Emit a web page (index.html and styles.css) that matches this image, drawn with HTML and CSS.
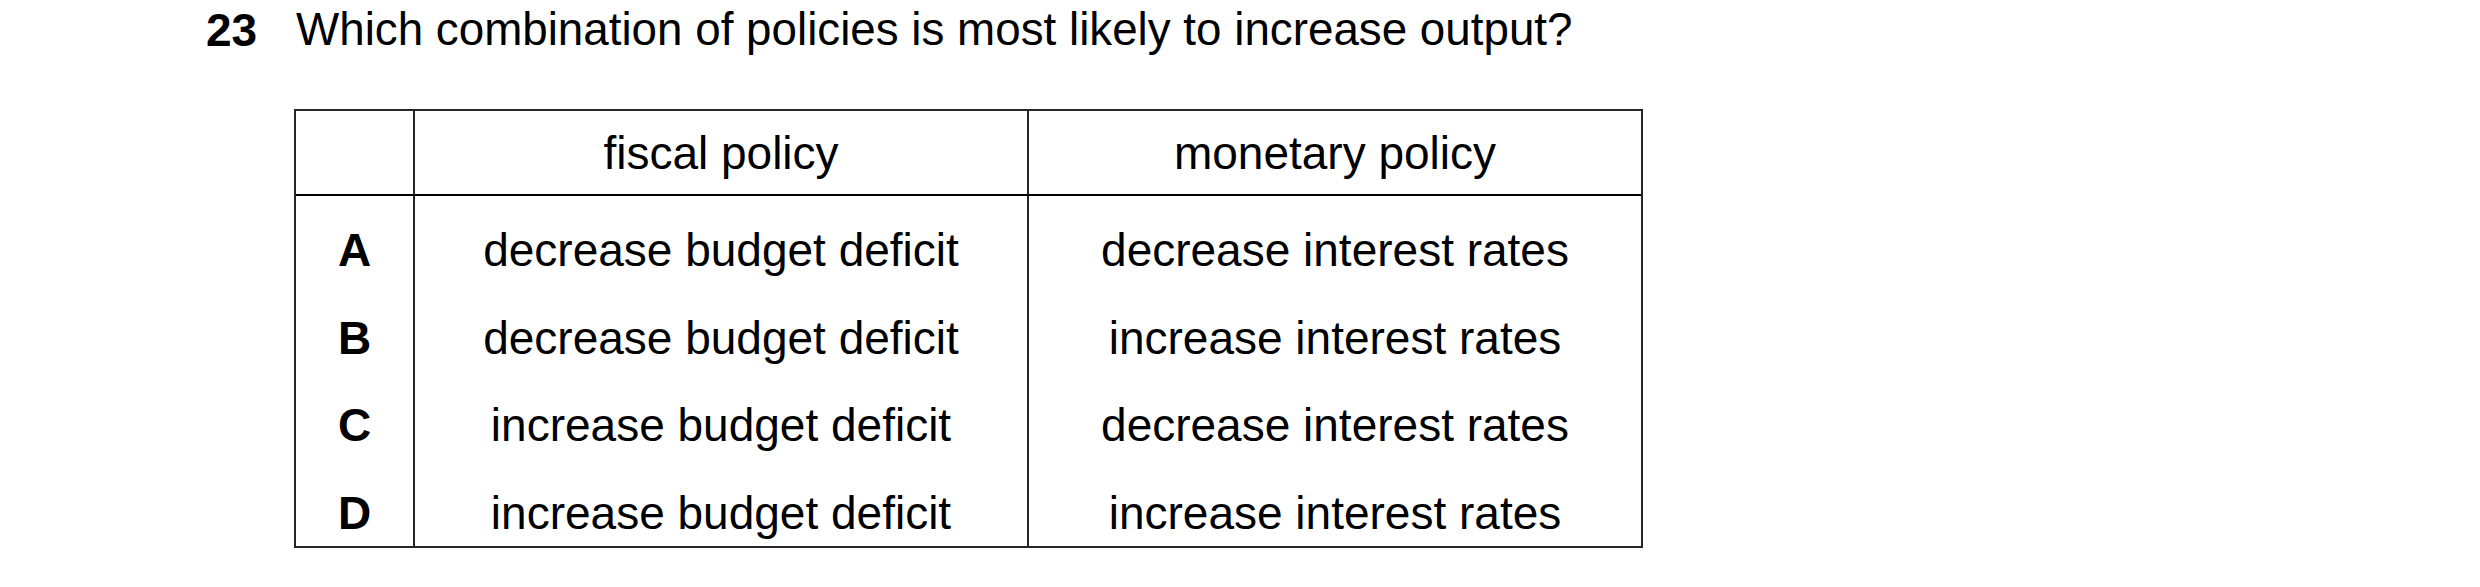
FILE: index.html
```html
<!DOCTYPE html>
<html lang="en">
<head>
<meta charset="utf-8">
<title>Question 23</title>
<link rel="stylesheet" href="styles.css">
</head>
<body>
  <div class="question">
    <span class="qnum">23</span>
    <span class="qtext">Which combination of policies is most likely to increase output?</span>
  </div>
  <div class="table">
    <div class="cell head key"></div>
    <div class="cell head">fiscal policy</div>
    <div class="cell head">monetary policy</div>
    <div class="cell body key">
      <div class="line">A</div>
      <div class="line">B</div>
      <div class="line">C</div>
      <div class="line">D</div>
    </div>
    <div class="cell body">
      <div class="line">decrease budget deficit</div>
      <div class="line">decrease budget deficit</div>
      <div class="line">increase budget deficit</div>
      <div class="line">increase budget deficit</div>
    </div>
    <div class="cell body">
      <div class="line">decrease interest rates</div>
      <div class="line">increase interest rates</div>
      <div class="line">decrease interest rates</div>
      <div class="line">increase interest rates</div>
    </div>
  </div>
</body>
</html>
```
FILE: styles.css
```css
html, body {
  margin: 0;
  padding: 0;
  background: #ffffff;
}

body {
  font-family: "Liberation Sans", Arial, sans-serif;
  font-size: 46px;
  color: #000000;
}

.question {
  display: flex;
  padding-left: 206px;
  padding-top: 2px;
  line-height: 56px;
  height: 56px;
}

.qnum {
  font-weight: bold;
  width: 90px;
  flex: none;
}

.qtext {
  white-space: nowrap;
  font-size: 45.75px;
}

.table {
  display: grid;
  grid-template-columns: 117px 614px 614px;
  grid-template-rows: 85px 350px;
  width: max-content;
  margin-left: 294px;
  margin-top: 51px;
  border: 2px solid #262626;
}

.cell {
  text-align: center;
  border-left: 2px solid #262626;
}

.cell.key {
  border-left: none;
}

.head {
  display: flex;
  align-items: center;
  justify-content: center;
  line-height: 56px;
  border-bottom: 2px solid #000000;
}

.body {
  display: flex;
  flex-direction: column;
  gap: 31.5px;
  padding-top: 26px;
}

.line {
  line-height: 56px;
  height: 56px;
  white-space: nowrap;
}

.key .line {
  font-weight: bold;
}
```
